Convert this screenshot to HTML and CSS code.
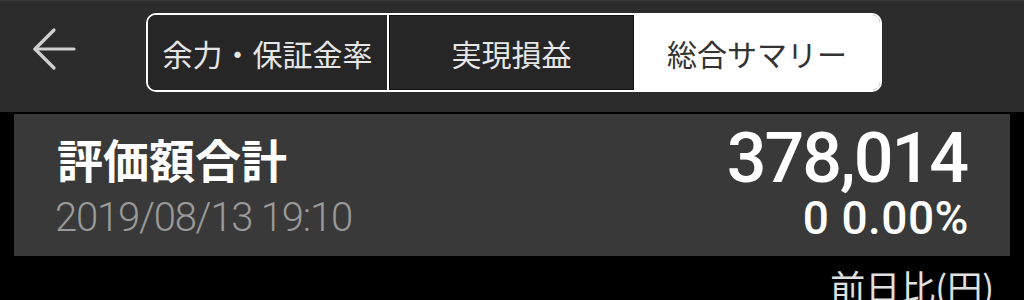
FILE: index.html
```html
<!DOCTYPE html>
<html lang="ja">
<head>
<meta charset="utf-8">
<link rel="stylesheet" href="styles.css">
</head>
<body>
<header class="topbar">
  <button class="back" aria-label="戻る">
    <svg width="44" height="44" viewBox="0 0 44 44" fill="none" stroke="#d0d0d0" stroke-width="3.2" stroke-linecap="round" stroke-linejoin="round">
      <path d="M42 22 H3"/>
      <path d="M22 3 L3 22 L22 41"/>
    </svg>
  </button>
  <nav class="segments">
    <div class="seg seg-first">余力・保証金率</div>
    <div class="seg seg-mid">実現損益</div>
    <div class="seg seg-active">総合サマリー</div>
  </nav>
</header>
<main class="content">
  <section class="card">
    <div class="card-left">
      <div class="title">評価額合計</div>
      <div class="date">2019/08/13 19:10</div>
    </div>
    <div class="card-right">
      <div class="total">378,014</div>
      <div class="change">0 0.00%</div>
    </div>
  </section>
  <div class="sublabel">前日比(円)</div>
</main>
</body>
</html>
```
FILE: styles.css
```css
* { box-sizing: border-box; }
html, body { margin: 0; padding: 0; }
body {
  background: #000;
  width: 1024px;
  height: 300px;
  overflow: hidden;
  font-family: "Noto Sans CJK JP", "Noto Sans", sans-serif;
}
.topbar {
  background: #2c2c2c;
  height: 112px;
  display: flex;
  align-items: flex-start;
  padding: 13px 0 0 32px;
  border-top: 1px solid #3a3a3a;
}
.back {
  background: none;
  border: 0;
  padding: 0;
  margin: 13px 70px 0 0;
  width: 44px;
  height: 44px;
  display: flex;
}
.segments {
  display: flex;
  width: 736px;
  height: 79px;
  margin-top: -1px;
  border: 2px solid #fff;
  border-radius: 10px;
  overflow: hidden;
}
.seg {
  display: flex;
  align-items: center;
  justify-content: center;
  font-size: 30px;
  line-height: 1;
  color: #e6e6e6;
  background: #262626;
}
.seg-first { width: 241px; border-right: 2px solid #fff; }
.seg-mid { width: 245px; box-shadow: inset 0 0 0 1px #111; }
.seg-active { flex: 1; background: #fff; color: #333; }
.content { padding-top: 2px; }
.card {
  margin: 0 14px;
  height: 142px;
  background: #393939;
  display: flex;
  justify-content: space-between;
  padding: 0 43px;
}
.card-left { padding-top: 21px; }
.title {
  font-size: 46px;
  line-height: 1;
  font-weight: 700;
  color: #fff;
}
.date {
  margin-top: 17px;
  font-family: "Roboto", "Liberation Sans", sans-serif;
  font-size: 40px;
  line-height: 1;
  font-weight: 300;
  color: #9a9a9a;
  letter-spacing: -1.2px;
  margin-left: -2px;
}
.card-right {
  padding-top: 9px;
  display: flex;
  flex-direction: column;
  align-items: flex-end;
  font-family: "Roboto", "Liberation Sans", sans-serif;
  color: #fff;
  font-weight: 500;
}
.total {
  font-size: 70px;
  line-height: 1;
  letter-spacing: -2px;
}
.change {
  margin-top: 2px;
  font-size: 46px;
  line-height: 1;
  letter-spacing: 0.5px;
  margin-right: -2px;
}
.sublabel {
  margin-top: 12px;
  padding-right: 30px;
  text-align: right;
  font-size: 35px;
  line-height: 1;
  color: #e0e0e0;
}
```
